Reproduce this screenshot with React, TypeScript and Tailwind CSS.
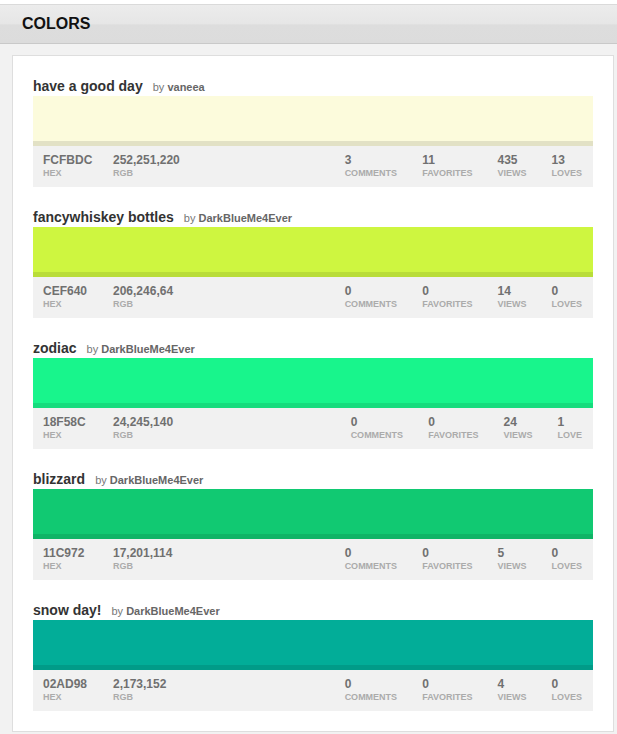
import React from "react";

type Item = {
  title: string;
  author: string;
  hex: string;
  rgb: string;
  comments: number;
  favorites: number;
  views: number;
  loves: number;
};

const items: Item[] = [
  { title: "have a good day", author: "vaneea", hex: "FCFBDC", rgb: "252,251,220", comments: 3, favorites: 11, views: 435, loves: 13 },
  { title: "fancywhiskey bottles", author: "DarkBlueMe4Ever", hex: "CEF640", rgb: "206,246,64", comments: 0, favorites: 0, views: 14, loves: 0 },
  { title: "zodiac", author: "DarkBlueMe4Ever", hex: "18F58C", rgb: "24,245,140", comments: 0, favorites: 0, views: 24, loves: 1 },
  { title: "blizzard", author: "DarkBlueMe4Ever", hex: "11C972", rgb: "17,201,114", comments: 0, favorites: 0, views: 5, loves: 0 },
  { title: "snow day!", author: "DarkBlueMe4Ever", hex: "02AD98", rgb: "2,173,152", comments: 0, favorites: 0, views: 4, loves: 0 },
];

function Stat({ value, label, fixed }: { value: string | number; label: string; fixed?: boolean }) {
  return (
    <div className={fixed ? "w-[70px] shrink-0" : "shrink-0"}>
      <div className="text-[12px] leading-[13px] font-bold text-[#707070]">{value}</div>
      <div className="text-[9px] leading-[12px] font-bold text-[#ababab]">{label}</div>
    </div>
  );
}

function ColorItem({ item }: { item: Item }) {
  return (
    <div className="flex flex-col">
      <div className="flex items-baseline h-[18px] mb-[1px] whitespace-nowrap">
        <span className="text-[14px] leading-[18px] font-bold text-[#333333]">{item.title}</span>
        <span className="ml-[10px] text-[11px] leading-[18px] text-[#777777]">
          by <span className="font-bold text-[#666666]">{item.author}</span>
        </span>
      </div>
      <div
        className="h-[50px] border-b-[5px] border-black/10"
        style={{ backgroundColor: `#${item.hex}` }}
      />
      <div className="flex items-start bg-[#f1f1f1] h-[41px] pt-[8px] pl-[10px] pr-[11px]">
        <Stat value={item.hex} label="HEX" fixed />
        <Stat value={item.rgb} label="RGB" />
        <div className="ml-auto flex gap-[25px]">
          <Stat value={item.comments} label="COMMENTS" />
          <Stat value={item.favorites} label="FAVORITES" />
          <Stat value={item.views} label="VIEWS" />
          <Stat value={item.loves} label={item.loves === 1 ? "LOVE" : "LOVES"} />
        </div>
      </div>
    </div>
  );
}

export default function App() {
  return (
    <div
      className="w-[617px] h-[734px] overflow-hidden bg-[#f2f2f2]"
      style={{ fontFamily: '"Liberation Sans", Arial, Helvetica, sans-serif' }}
    >
      <div className="h-[4px] bg-white" />
      <div className="h-[40px] border-t border-b border-t-[#dadada] border-b-[#c9c9c9] bg-[linear-gradient(to_bottom,#ececec_0%,#e6e6e6_50%,#dddddd_52%,#dcdcdc_100%)] flex items-center pl-[22px]">
        <h1 className="text-[16px] leading-[20px] font-bold text-[#111111]">COLORS</h1>
      </div>
      <div className="ml-[12px] mt-[11px] w-[602px] bg-white border border-[#dedede] pt-[21px] pb-[20px] px-[20px] flex flex-col gap-[21px]">
        {items.map((it) => (
          <ColorItem key={it.hex} item={it} />
        ))}
      </div>
    </div>
  );
}
